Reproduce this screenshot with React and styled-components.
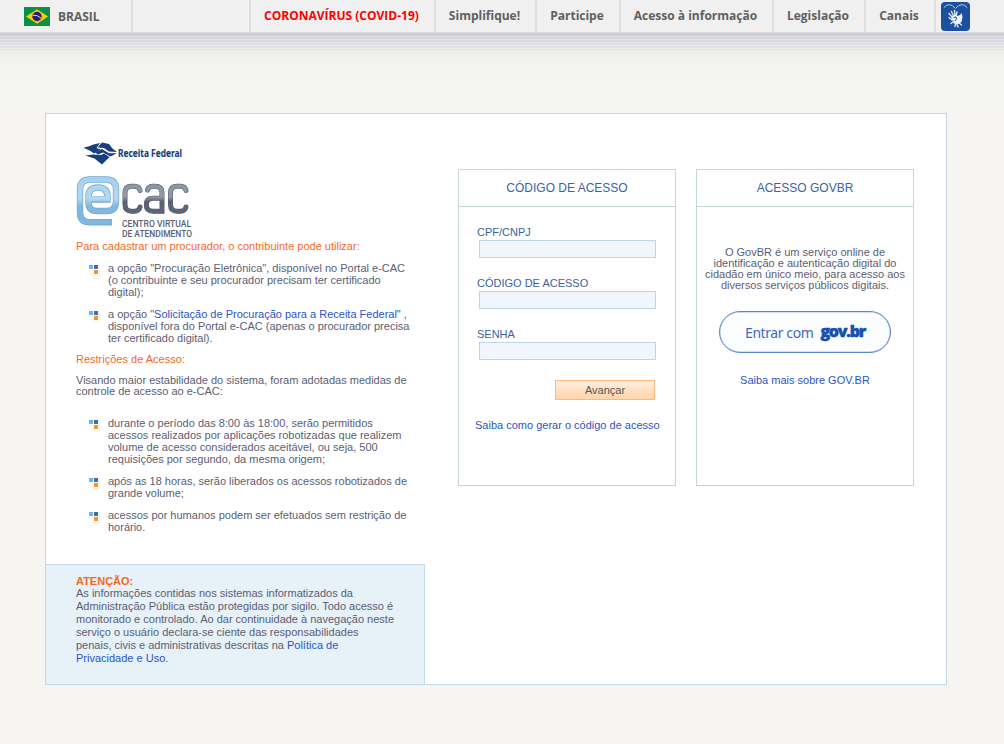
import React from "react";
import styled, { createGlobalStyle } from "styled-components";

const Global = createGlobalStyle`
  * { box-sizing: border-box; }
  body { margin: 0; background: #f6f5f1; font-family: "Liberation Sans", Arial, sans-serif; font-size: 11px; color: #5a5e74; }
  h1, h2, p, ul { margin: 0; padding: 0; font-weight: normal; }
  a { color: #2a55c8; text-decoration: none; }
`;

const Page = styled.div`
  height: 744px;
  overflow: hidden;
`;

const TopBar = styled.nav`
  display: flex;
  height: 32px;
  background: #f0f0f0;
  font: bold 12px/32px "Open Sans", sans-serif;
  color: #606060;
`;

const Country = styled.div`
  display: flex;
  align-items: center;
  gap: 8px;
  width: 133px;
  padding-left: 24px;
  border-right: 2px solid #dedede;
`;

const CountryName = styled.span`
  padding-top: 2px;
`;

const TopItem = styled.a`
  width: ${(p) => p.$width}px;
  padding-right: 2px;
  border-right: 2px solid #dedede;
  color: ${(p) => (p.$alert ? "#ff0000" : "#606060")};
  text-align: center;
  white-space: nowrap;
`;

const Libras = styled.svg`
  margin: 2px 0 0 5px;
`;

const Shade = styled.div`
  height: 81px;
  background:
    repeating-linear-gradient(to bottom, rgba(255,255,255,0) 0 2px, rgba(255,255,255,0.28) 2px 3px) 0 2px / 100% 22px no-repeat,
    linear-gradient(to bottom, #dcdcdc 0 1px, #cbccd8 1px 2px, #d2d3de 4px, #dadbe2 9px, #e3e3e5 14px, #ededec 22px, #f2f2ef 29px, #f5f5f1 50px, #f6f5f1 81px);
`;

const Panel = styled.main`
  display: flex;
  width: 902px;
  height: 572px;
  margin-left: 45px;
  background: #fff;
  border: 1px solid #c2d9e8;
`;

const Info = styled.section`
  display: flex;
  flex-direction: column;
  width: 379px;
`;

const Intro = styled.div`
  height: 450px;
  padding: 26px 0 0 30px;
  line-height: 12px;
  white-space: nowrap;
`;

const Logo = styled.svg`
  display: block;
`;

const Heading = styled.h2`
  font-size: 11px;
  line-height: 12px;
  color: #f26a1e;
`;

const Bullets = styled.ul`
  display: flex;
  flex-direction: column;
  gap: 10px;
  margin: ${(p) => p.$top}px 0 9px;
  list-style: none;
`;

const Bullet = styled.li`
  display: flex;
  gap: 6px;
  padding-left: 12px;
`;

const Paragraph = styled.p`
  margin-top: 10px;
  line-height: 11px;
`;

const Notice = styled.aside`
  height: 120px;
  padding: 10px 0 0 30px;
  background: #e6f1f8;
  border-top: 1px solid #c2d9e8;
  border-right: 1px solid #c2d9e8;
  line-height: 13px;
  white-space: nowrap;
`;

const NoticeTitle = styled.h2`
  font-size: 11px;
  font-weight: bold;
  line-height: 12px;
  color: #f26a1e;
`;

const Cards = styled.div`
  display: flex;
  align-items: flex-start;
  gap: 20px;
  padding: 55px 0 0 33px;
`;

const Card = styled.section`
  width: 218px;
  height: 317px;
  border: 1px solid #bfd8d8;
`;

const CardTitle = styled.h1`
  height: 37px;
  border-bottom: 1px solid #bfd8d8;
  font-size: 12px;
  line-height: 37px;
  text-align: center;
  color: #3d62a0;
`;

const Form = styled.form`
  display: flex;
  flex-direction: column;
  padding: 18px 19px 0 18px;
`;

const Field = styled.label`
  display: flex;
  flex-direction: column;
  height: 51px;
  line-height: 15px;
  color: #3d62a0;
`;

const Input = styled.input`
  width: 177px;
  height: 18px;
  margin: 0 0 0 2px;
  padding: 0 4px;
  background: #f0f6fb;
  border: 1px solid #bdd6e6;
  border-radius: 0;
`;

const Submit = styled.button`
  align-self: flex-end;
  width: 100px;
  height: 20px;
  margin: 2px 1px 0 0;
  padding: 0;
  background: linear-gradient(#fff1e4, #ffddbb 60%, #ffd6ad);
  border: 1px solid #fbb982;
  font: 11px "Liberation Sans", Arial, sans-serif;
  color: #555;
`;

const FormLink = styled.a`
  margin-top: 19px;
  margin-left: -2px;
  line-height: 12px;
  white-space: nowrap;
`;

const GovContent = styled.div`
  display: flex;
  flex-direction: column;
  align-items: center;
  padding-top: 40px;
  text-align: center;
  line-height: 11px;
  white-space: nowrap;
`;

const GovButton = styled.button`
  display: flex;
  align-items: center;
  justify-content: center;
  gap: 7px;
  width: 172px;
  height: 42px;
  margin: 20px 0 22px;
  padding: 2px 0 0;
  background: #fcfdff;
  border: 1px solid #5f86cd;
  box-shadow: inset 0 0 0 0.5px #a9c0e6;
  border-radius: 21px;
  font: 14px/24px "Noto Sans", sans-serif;
  letter-spacing: -0.42px;
  color: #4169bd;
`;

const GovMark = styled.strong`
  margin-top: -4px;
  font: 800 16px/24px "Open Sans", sans-serif;
  letter-spacing: -1.25px;
  color: #164fae;
  -webkit-text-stroke: 0.5px #164fae;
`;

function Flag() {
  return (
    <svg width="26" height="19" viewBox="0 0 26 19">
      <path fill="#089344" d="M0 0h26v19H0z" />
      <path fill="#ffcb05" d="M13 2.300 24 9.500 13 16.700 2 9.500z" />
      <circle cx="13" cy="9.500" r="4.700" fill="#2b1e78" />
      <path d="M8.700 8.200q5-.5 8.400 3" fill="none" stroke="#d9d9e8" strokeWidth="1" />
    </svg>
  );
}

function LibrasIcon() {
  return (
    <Libras width="29" height="29" viewBox="0 0 29 29">
      <rect width="29" height="29" rx="4" fill="#1b509f" />
      <g fill="none" stroke="#dce8f8" strokeLinecap="round">
        <path d="M3 5.500Q5 2.500 8.500 2.700 11.500 3 14 6M26 5.500Q24 2.500 20.500 2.700 17.500 3 15 6" strokeWidth=".8" />
        <path d="m11 15-3-3.500m4.500 2.500-2-4.500m3.500 4-.5-5M15 14l1-4M11 18l-3-2.500" strokeWidth="1.400" />
        <path d="m17 20 3.500 3m-5-2 1.500 4m-2.500-4-.5 3.500m-1.500-5-2.500 2" strokeWidth="1.400" />
      </g>
      <path d="m10.500 14.500 3.500-2 2.500 1.500 2.500-1 1.500-2 1 4-1 5-3 2-5-.5v-3l-2-.5z" fill="#eef5ff" />
      <path d="m12.500 15.500 2.500-.5.5 2-1.500 2" fill="none" stroke="#1b509f" strokeWidth="1" />
    </Libras>
  );
}

function Squares() {
  return (
    <svg width="14" height="14" viewBox="0 0 14 14" shapeRendering="crispEdges">
      <path fill="#f1f1f3" d="M0 3h12v11H5V9H0z" />
      <path fill="#fff" d="M0 2h11v11H4V8H0z" />
      <path fill="#76b4dd" d="M1 3h4v4H1z" />
      <path fill="#3f6eb0" d="M6 3h4v4H6z" />
      <path fill="#f7941d" d="M6 8h4v4H6z" />
    </svg>
  );
}

function Logos() {
  return (
    <Logo width="130" height="100" viewBox="76 140 130 100">
      <defs>
        <linearGradient id="blue" gradientUnits="userSpaceOnUse" x1="0" y1="176" x2="0" y2="226">
          <stop offset="0" stopColor="#a6d0ec" />
          <stop offset=".45" stopColor="#b5d8ef" />
          <stop offset=".6" stopColor="#80b8df" />
          <stop offset="1" stopColor="#80b8df" />
        </linearGradient>
        <linearGradient id="gray" gradientUnits="userSpaceOnUse" x1="0" y1="183" x2="0" y2="214">
          <stop offset="0" stopColor="#8f94a3" />
          <stop offset=".45" stopColor="#9498a6" />
          <stop offset=".6" stopColor="#5a6177" />
          <stop offset="1" stopColor="#5f667b" />
        </linearGradient>
      </defs>
      <g fill="#183f79">
        <path d="M83.500 147.800q6-1.500 10-3.300l6.500-1.500-3.500 5 4 1.500-6.500 4-3.500-2.500z" />
        <path d="M97.500 147.500 102 142.500l7 1.500 3.500 4.500 4.500 3.500-8-.5-5-3.500z" />
        <path d="m95 152.300 7-3.300 7 4.300h8l-6.500 3.200-7.500-4-5 2z" />
        <path d="m85.500 155.500 7.500-1 8 .5 3-1.500 5.500 3.500-7.500 7.500-7.500-6z" />
      </g>
      <text x="118" y="157.300" fontFamily="Noto Sans" fontSize="10" fontWeight="700" fill="#183f79" stroke="#183f79" strokeWidth=".15" textLength="64" lengthAdjust="spacingAndGlyphs">Receita Federal</text>
      <path d="M112 222.300H90Q80 222.300 80 212.500V189.500Q80 179.500 90 179.500H106Q116 179.500 116 189.500V201.500Q116 211 106.500 211H97Q88.500 211 88.500 202.500V196.500Q88.500 187.500 98 187.500T107.500 196.500V199.500H90" fill="none" stroke="#6faad4" strokeWidth="6.400" />
      <path d="M111.500 222.300H90Q80 222.300 80 212.500V189.500Q80 179.500 90 179.500H106Q116 179.500 116 189.500V201.500Q116 211 106.500 211H97Q88.500 211 88.500 202.500V196.500Q88.500 187.500 98 187.500T107.500 196.500V199H91" fill="none" stroke="url(#blue)" strokeWidth="5" />
      {["#555c72", "url(#gray)"].map((stroke, i) => (
        <g key={stroke} fill="none" stroke={stroke} strokeWidth={i ? 3.9 : 5} strokeLinecap="round">
          <path d="M140 190.500Q139 186.300 134.500 186.300H131.500Q125 186.300 125 193V204.500Q125 211.200 131.500 211.200H134.500Q139 211.200 140 207" />
          <path d="M147.500 190Q148.500 186.300 153 186.300H155Q162 186.300 162 193V211.200H153Q146.300 211.200 146.300 204.800T153 198.300H161" />
          <path d="M186 190.500Q185 186.300 180.500 186.300H177Q170.500 186.300 170.500 193V204.500Q170.500 211.200 177 211.200H180.500Q185 211.200 186 207" />
        </g>
      ))}
      <g fontFamily="Roboto" fontSize="9.800" fontWeight="500" fill="#5a6075">
        <text x="122" y="227" textLength="69" lengthAdjust="spacingAndGlyphs">CENTRO VIRTUAL</text>
        <text x="122" y="237.300" textLength="70" lengthAdjust="spacingAndGlyphs">DE ATENDIMENTO</text>
      </g>
    </Logo>
  );
}

const menu = [
  ["CORONAVÍRUS (COVID-19)", 185],
  ["Simplifique!", 101],
  ["Participe", 84],
  ["Acesso à informação", 153],
  ["Legislação", 92],
  ["Canais", 70],
];

export default function App() {
  return (
    <Page>
      <Global />
      <TopBar>
        <Country><Flag /><CountryName>BRASIL</CountryName></Country>
        <TopItem $width={118} />
        {menu.map(([label, width], i) => (
          <TopItem key={label} $width={width} $alert={i === 0}>{label}</TopItem>
        ))}
        <LibrasIcon />
      </TopBar>
      <Shade />
      <Panel>
        <Info>
          <Intro>
            <Logos />
            <Heading>Para cadastrar um procurador, o contribuinte pode utilizar:</Heading>
            <Bullets $top={10}>
              <Bullet>
                <Squares />
                <div>a opção "Procuração Eletrônica", disponível no Portal e-CAC<br />(o contribuinte e seu procurador precisam ter certificado<br />digital);</div>
              </Bullet>
              <Bullet>
                <Squares />
                <div>a opção "<a href="#solicitacao">Solicitação de Procuração para a Receita Federal"</a> ,<br />disponível fora do Portal e-CAC (apenas o procurador precisa<br />ter certificado digital).</div>
              </Bullet>
            </Bullets>
            <Heading>Restrições de Acesso:</Heading>
            <Paragraph>Visando maior estabilidade do sistema, foram adotadas medidas de<br />controle de acesso ao e-CAC:</Paragraph>
            <Bullets $top={20}>
              <Bullet>
                <Squares />
                <div>durante o período das 8:00 às 18:00, serão permitidos<br />acessos realizados por aplicações robotizadas que realizem<br />volume de acesso considerados aceitável, ou seja, 500<br />requisições por segundo, da mesma origem;</div>
              </Bullet>
              <Bullet>
                <Squares />
                <div>após as 18 horas, serão liberados os acessos robotizados de<br />grande volume;</div>
              </Bullet>
              <Bullet>
                <Squares />
                <div>acessos por humanos podem ser efetuados sem restrição de<br />horário.</div>
              </Bullet>
            </Bullets>
          </Intro>
          <Notice>
            <NoticeTitle>ATENÇÃO:</NoticeTitle>
            <p>As informações contidas nos sistemas informatizados da<br />Administração Pública estão protegidas por sigilo. Todo acesso é<br />monitorado e controlado. Ao dar continuidade à navegação neste<br />serviço o usuário declara-se ciente das responsabilidades<br />penais, civis e administrativas descritas na <a href="#politica">Política de<br />Privacidade e Uso</a>.</p>
          </Notice>
        </Info>
        <Cards>
          <Card>
            <CardTitle>CÓDIGO DE ACESSO</CardTitle>
            <Form>
              <Field>CPF/CNPJ<Input /></Field>
              <Field>CÓDIGO DE ACESSO<Input /></Field>
              <Field>SENHA<Input type="password" /></Field>
              <Submit type="button">Avançar</Submit>
              <FormLink href="#codigo">Saiba como gerar o código de acesso</FormLink>
            </Form>
          </Card>
          <Card>
            <CardTitle>ACESSO GOVBR</CardTitle>
            <GovContent>
              <p>O GovBR é um serviço online de<br />identificação e autenticação digital do<br />cidadão em único meio, para acesso aos<br />diversos serviços públicos digitais.</p>
              <GovButton type="button"><span>Entrar com</span><GovMark>gov.br</GovMark></GovButton>
              <a href="#govbr">Saiba mais sobre GOV.BR</a>
            </GovContent>
          </Card>
        </Cards>
      </Panel>
    </Page>
  );
}
